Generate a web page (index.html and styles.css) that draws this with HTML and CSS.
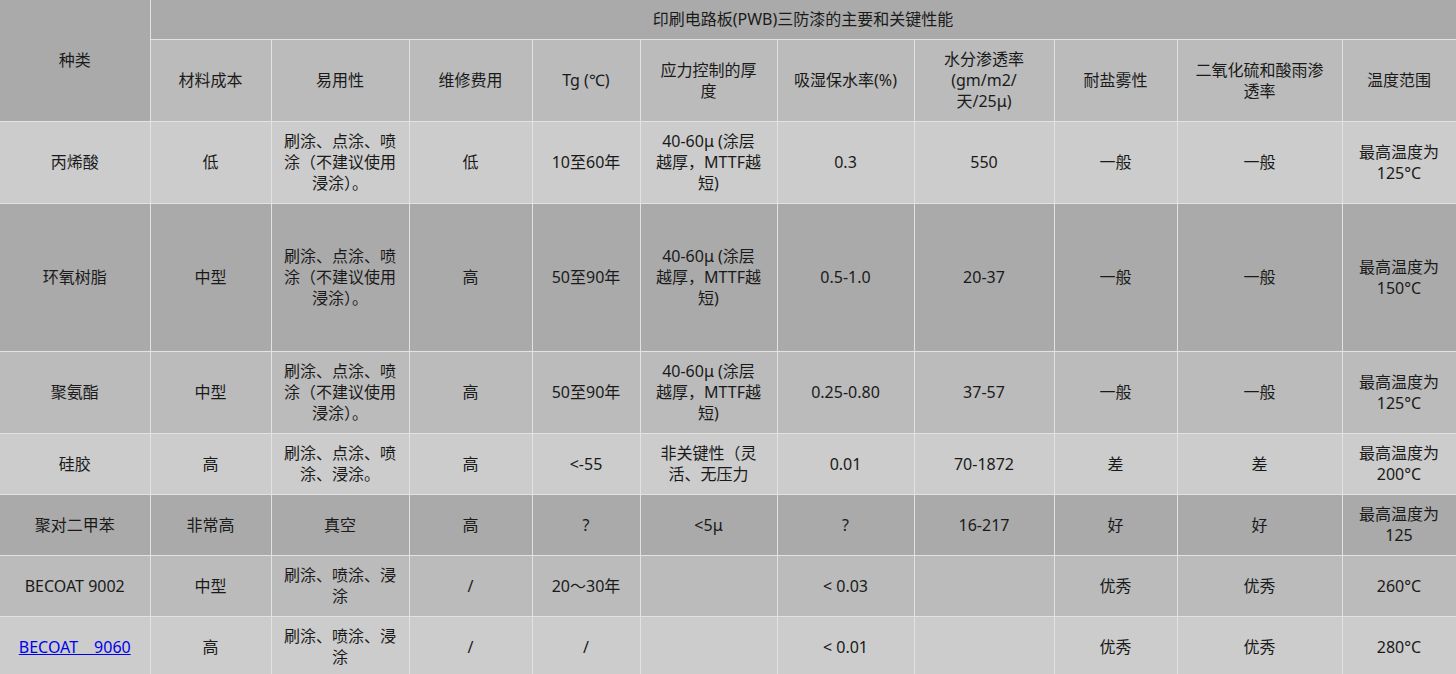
FILE: index.html
```html
<!DOCTYPE html>
<html lang="zh-CN">
<head>
<meta charset="utf-8">
<title>三防漆性能</title>
<link rel="stylesheet" href="styles.css">
</head>
<body>
<table class="spec">
  <colgroup>
    <col class="c1"><col class="c2"><col class="c3"><col class="c4"><col class="c5"><col class="c6"><col class="c7"><col class="c8"><col class="c9"><col class="c10"><col class="c11">
  </colgroup>
  <tr class="bg-a h1">
    <td rowspan="2" class="kind">种类</td>
    <td colspan="10">印刷电路板(PWB)三防漆的主要和关键性能</td>
  </tr>
  <tr class="bg-b">
    <td>材料成本</td>
    <td>易用性</td>
    <td>维修费用</td>
    <td>Tg (℃)</td>
    <td>应力控制的厚度</td>
    <td>吸湿保水率(%)</td>
    <td>水分渗透率(gm/m2/天/25μ)</td>
    <td>耐盐雾性</td>
    <td>二氧化硫和酸雨渗透率</td>
    <td>温度范围</td>
  </tr>
  <tr class="bg-c">
    <td>丙烯酸</td>
    <td>低</td>
    <td>刷涂、点涂、喷涂（不建议使用浸涂）。</td>
    <td>低</td>
    <td>10至60年</td>
    <td class="thick">40-60μ (涂层<br>越厚，MTTF越短)</td>
    <td>0.3</td>
    <td>550</td>
    <td>一般</td>
    <td>一般</td>
    <td>最高温度为125°C</td>
  </tr>
  <tr class="bg-a tall">
    <td>环氧树脂</td>
    <td>中型</td>
    <td>刷涂、点涂、喷涂（不建议使用浸涂）。</td>
    <td>高</td>
    <td>50至90年</td>
    <td class="thick">40-60μ (涂层<br>越厚，MTTF越短)</td>
    <td>0.5-1.0</td>
    <td>20-37</td>
    <td>一般</td>
    <td>一般</td>
    <td>最高温度为150°C</td>
  </tr>
  <tr class="bg-b">
    <td>聚氨酯</td>
    <td>中型</td>
    <td>刷涂、点涂、喷涂（不建议使用浸涂）。</td>
    <td>高</td>
    <td>50至90年</td>
    <td class="thick">40-60μ (涂层<br>越厚，MTTF越短)</td>
    <td>0.25-0.80</td>
    <td>37-57</td>
    <td>一般</td>
    <td>一般</td>
    <td>最高温度为125°C</td>
  </tr>
  <tr class="bg-c">
    <td>硅胶</td>
    <td>高</td>
    <td>刷涂、点涂、喷涂、浸涂。</td>
    <td>高</td>
    <td>&lt;-55</td>
    <td>非关键性（灵活、无压力</td>
    <td>0.01</td>
    <td>70-1872</td>
    <td>差</td>
    <td>差</td>
    <td>最高温度为200°C</td>
  </tr>
  <tr class="bg-a">
    <td>聚对二甲苯</td>
    <td>非常高</td>
    <td>真空</td>
    <td>高</td>
    <td>?</td>
    <td>&lt;5μ</td>
    <td>?</td>
    <td>16-217</td>
    <td>好</td>
    <td>好</td>
    <td>最高温度为125</td>
  </tr>
  <tr class="bg-b">
    <td>BECOAT 9002</td>
    <td>中型</td>
    <td>刷涂、喷涂、浸涂</td>
    <td>/</td>
    <td>20～30年</td>
    <td></td>
    <td>&lt; 0.03</td>
    <td></td>
    <td>优秀</td>
    <td>优秀</td>
    <td>260°C</td>
  </tr>
  <tr class="bg-c">
    <td><a href="#" class="link">BECOAT　9060</a></td>
    <td>高</td>
    <td>刷涂、喷涂、浸涂</td>
    <td>/</td>
    <td>/</td>
    <td></td>
    <td>&lt; 0.01</td>
    <td></td>
    <td>优秀</td>
    <td>优秀</td>
    <td>280°C</td>
  </tr>
</table>
</body>
</html>
```
FILE: styles.css
```css
html, body {
  margin: 0;
  padding: 0;
  background: #ffffff;
}

.spec {
  width: 1456px;
  border-collapse: collapse;
  table-layout: fixed;
  font-family: "Noto Sans", "Noto Sans CJK SC", sans-serif;
  font-size: 16px;
  color: #1a1a1a;
}

.c1 { width: 150px; }
.c2 { width: 121px; }
.c3 { width: 138px; }
.c4 { width: 123px; }
.c5 { width: 108px; }
.c6 { width: 137px; }
.c7 { width: 137px; }
.c8 { width: 140px; }
.c9 { width: 123px; }
.c10 { width: 165px; }
.c11 { width: 114px; }

.spec td {
  border: 1px solid #e2e2e2;
  padding: 9px 12.5px;
  text-align: center;
  vertical-align: middle;
  line-height: 21px;
}

.spec td.thick {
  padding-left: 11px;
  padding-right: 11px;
}

.spec tr:first-child td {
  border-top: none;
}

.spec td:first-child {
  border-left: none;
}

.bg-a td { background: #aaaaaa; }
.bg-b td { background: #bbbbbb; }
.bg-c td { background: #cccccc; }

.kind { background: #aaaaaa !important; }

.tall td { height: 129px; }

.link {
  color: #0000ee;
  text-decoration: underline;
}
```
